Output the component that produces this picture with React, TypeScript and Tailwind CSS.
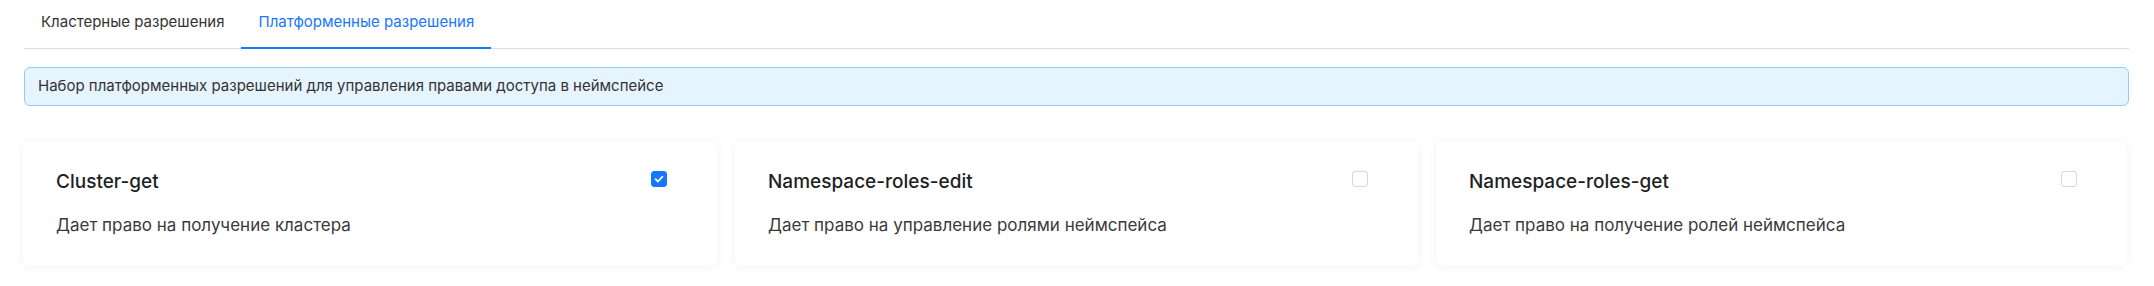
import { useState } from 'react';

type Permission = {
  id: string;
  title: string;
  description: string;
  checked: boolean;
};

const initialPermissions: Permission[] = [
  { id: 'cluster-get', title: 'Cluster-get', description: 'Дает право на получение кластера', checked: true },
  { id: 'ns-roles-edit', title: 'Namespace-roles-edit', description: 'Дает право на управление ролями неймспейса', checked: false },
  { id: 'ns-roles-get', title: 'Namespace-roles-get', description: 'Дает право на получение ролей неймспейса', checked: false },
];

function Checkbox({ checked, onChange }: { checked: boolean; onChange: () => void }) {
  return (
    <button
      type="button"
      onClick={onChange}
      className={`mt-[2px] flex h-4 w-4 shrink-0 items-center justify-center rounded-[3px] border ${
        checked ? 'border-[#1677ff] bg-[#1677ff]' : 'border-[#d9d9d9] bg-white'
      }`}
    >
      {checked && (
        <svg width="10" height="10" viewBox="0 0 10 10" fill="none">
          <path d="M1.6 5.2 L4 7.5 L8.4 2.6" stroke="white" strokeWidth="1.8" strokeLinecap="round" strokeLinejoin="round" />
        </svg>
      )}
    </button>
  );
}

export default function App() {
  const [tab, setTab] = useState<'cluster' | 'platform'>('platform');
  const [permissions, setPermissions] = useState(initialPermissions);

  const toggle = (id: string) => {
    setPermissions(prev => prev.map(p => (p.id === id ? { ...p, checked: !p.checked } : p)));
  };

  return (
    <div className="min-h-screen bg-white pl-6 pr-[25px] text-[#262626]" style={{ fontFamily: 'Inter, "Noto Sans", sans-serif' }}>
      {/* Tabs */}
      <div className="flex h-[49px] border-b border-[#dcdcdc]">
        <button
          onClick={() => setTab('cluster')}
          className={`-mb-px flex items-center border-b-2 px-[17px] pb-[2px] text-[15px] ${
            tab === 'cluster' ? 'border-[#1677ff] text-[#1677ff]' : 'border-transparent text-[#333333]'
          }`}
        >
          Кластерные разрешения
        </button>
        <button
          onClick={() => setTab('platform')}
          className={`-mb-px flex items-center border-b-2 px-[17px] pb-[2px] text-[15px] ${
            tab === 'platform' ? 'border-[#1677ff] text-[#1677ff]' : 'border-transparent text-[#333333]'
          }`}
        >
          Платформенные разрешения
        </button>
      </div>

      {/* Info */}
      <div className="mt-[18px] flex h-[39px] items-center rounded-[6px] border border-[#91caff] bg-[#e6f4ff] px-[13px] text-[15px] text-[#333333]">
        Набор платформенных разрешений для управления правами доступа в неймспейсе
      </div>

      {/* Cards */}
      <div className="-ml-px mt-[35px] mr-[2px] grid grid-cols-[694fr_683fr_691fr] gap-[18px]">
        {permissions.map(p => (
          <div
            key={p.id}
            className="rounded-[6px] bg-white pb-[29px] pl-[33px] pr-[50px] pt-[28px] shadow-[0_1px_10px_rgba(0,0,0,0.06)]"
          >
            <div className="flex items-start justify-between">
              <div className="text-[19px] font-medium leading-[26px] text-[#1f1f1f]">{p.title}</div>
              <Checkbox checked={p.checked} onChange={() => toggle(p.id)} />
            </div>
            <div className="mt-[18px] text-[17px] leading-[24px] text-[#3a3a3a]">{p.description}</div>
          </div>
        ))}
      </div>
    </div>
  );
}
